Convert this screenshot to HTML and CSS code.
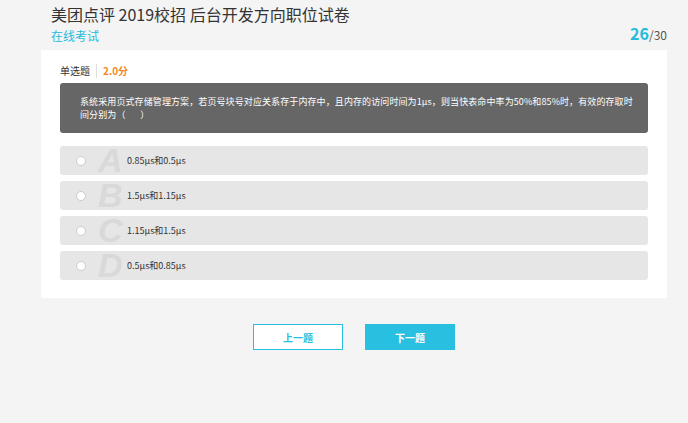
FILE: index.html
```html
<!DOCTYPE html>
<html lang="zh">
<head>
<meta charset="utf-8">
<link rel="stylesheet" href="styles.css">
</head>
<body>
<div class="page">
  <header class="head">
    <h1 class="title">美团点评 2019校招 后台开发方向职位试卷</h1>
    <div class="subrow">
      <span class="sub">在线考试</span>
      <span class="progress"><b>26</b>/30</span>
    </div>
  </header>
  <section class="card">
    <div class="qtype"><span class="kind">单选题</span><span class="score">2.0分</span></div>
    <div class="question">系统采用页式存储管理方案，若页号块号对应关系存于内存中，且内存的访问时间为1μs，则当快表命中率为50%和85%时，有效的存取时间分别为（&nbsp;&nbsp;&nbsp;&nbsp;&nbsp;&nbsp;&nbsp;）</div>
    <ul class="options">
      <li class="option"><span class="radio"></span><span class="letter">A</span><span class="otext">0.85μs和0.5μs</span></li>
      <li class="option"><span class="radio"></span><span class="letter">B</span><span class="otext">1.5μs和1.15μs</span></li>
      <li class="option"><span class="radio"></span><span class="letter">C</span><span class="otext">1.15μs和1.5μs</span></li>
      <li class="option"><span class="radio"></span><span class="letter">D</span><span class="otext">0.5μs和0.85μs</span></li>
    </ul>
  </section>
  <nav class="buttons">
    <button class="btn prev">上一题</button>
    <button class="btn next">下一题</button>
  </nav>
</div>
</body>
</html>
```
FILE: styles.css
```css
* { box-sizing: border-box; }
html, body { margin: 0; padding: 0; }
body {
  background: #f4f4f4;
  font-family: "Noto Sans CJK SC", "Liberation Sans", sans-serif;
  color: #333;
  width: 688px;
  height: 423px;
  overflow: hidden;
}
.page { padding: 0 21px 0 41px; }
.head { padding: 0 0 0 10px; }
.title {
  margin: 0;
  padding-top: 3px;
  font-size: 16px;
  font-weight: normal;
  line-height: 22px;
  color: #333;
}
.subrow {
  display: flex;
  justify-content: space-between;
  align-items: flex-end;
  height: 25px;
  padding-bottom: 6px;
}
.sub { font-size: 12px; line-height: 16px; color: #25bbdc; }
.progress { font-size: 12px; color: #555; line-height: 18px; }
.progress b { font-size: 16px; color: #25bbdc; font-weight: bold; }
.card {
  background: #fff;
  padding: 13px 19px 17px 19px;
  height: 248px;
}
.qtype { display: flex; align-items: center; font-size: 10px; line-height: 14px; height: 15px; }
.kind { color: #333; padding-right: 6px; border-right: 1px solid #ddd; }
.score { color: #f5891f; font-weight: bold; padding-left: 6px; }
.question {
  margin-top: 5px;
  background: #666;
  color: #fff;
  border-radius: 3px;
  height: 50px;
  padding: 12px 14px 0 20px;
  font-size: 9px;
  line-height: 13px;
  letter-spacing: 0.1px;
}
.options { list-style: none; margin: 13px 0 0; padding: 0; display: flex; flex-direction: column; gap: 6px; }
.option {
  display: flex;
  align-items: center;
  height: 29px;
  background: #e6e6e6;
  border-radius: 3px;
  padding-left: 16px;
}
.radio {
  width: 10px; height: 10px;
  border-radius: 50%;
  background: #fff;
  border: 1px solid #ccc;
  margin-right: 12px;
}
.letter {
  font-family: "Liberation Sans", sans-serif;
  font-style: italic;
  font-weight: bold;
  font-size: 34px;
  color: #d9d9d9;
  width: 29px;
  line-height: 29px;
  height: 29px;
}
.otext { font-size: 9px; color: #333; }
.buttons { display: flex; justify-content: center; gap: 22px; margin-top: 26px; }
.btn {
  width: 90px; height: 26px;
  font-family: inherit;
  font-size: 10px;
  font-weight: bold;
  border: 1px solid #29bfe0;
  cursor: pointer;
}
.prev { background: #fff; color: #29bfe0; }
.next { background: #29bfe0; color: #fff; }
```
